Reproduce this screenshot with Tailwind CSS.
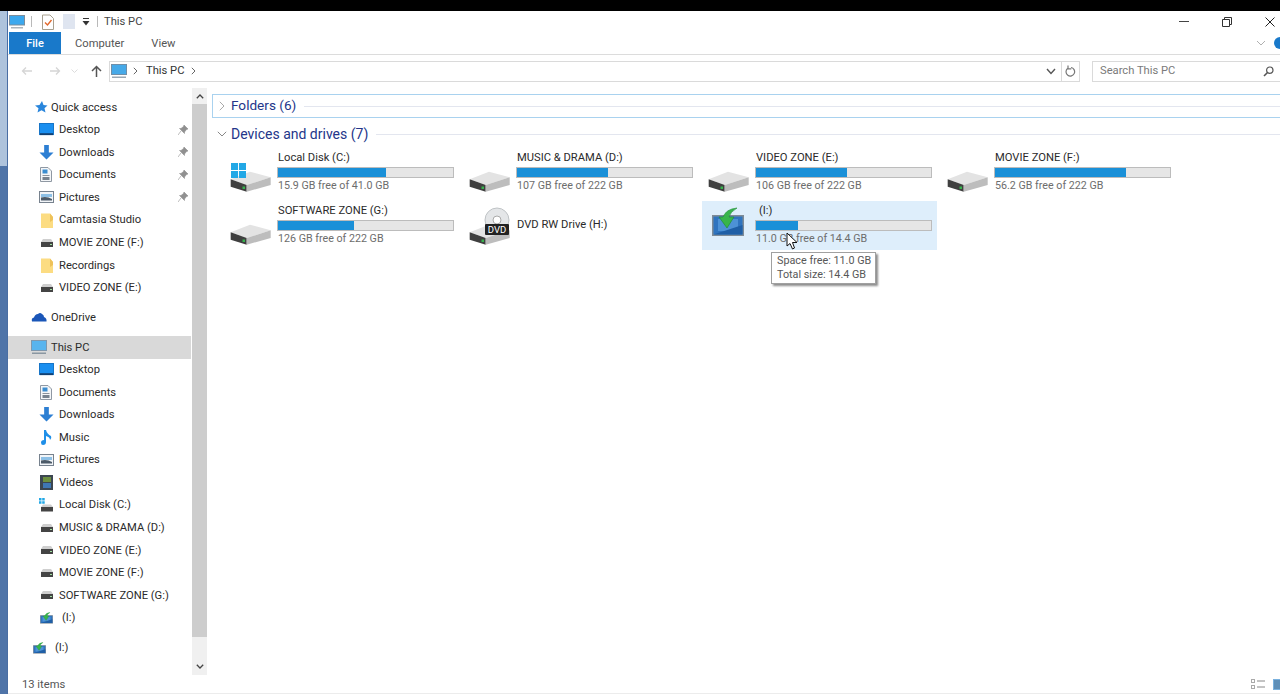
<!doctype html>
<html><head><meta charset="utf-8"><script src="https://cdn.jsdelivr.net/npm/@tailwindcss/browser@4"></script></head>
<body class="m-0 overflow-hidden bg-white">
<svg class="hidden" width="0" height="0">
<symbol id="hdd" viewBox="0 0 42 24"><path d="M.7 11.300 L20 3.700 L40.700 9.300 L16.700 17Z" fill="#e3e3e3"/><path d="M.7 11.300 L16.700 17 V23.700 L.7 18.700Z" fill="#3f3f3f"/><path d="M16.700 17 L40.700 9.300 V17 L16.700 23.700Z" fill="#bdbdbd"/><rect x="12.500" y="18.500" width="2.500" height="2.500" fill="#37b24d"/></symbol>
<symbol id="mini" viewBox="0 0 14 10"><path d="M3 1 H11 L13 4 H1Z" fill="#cfcfcf"/><rect x="1" y="4" width="12" height="5" fill="#444"/><rect x="10" y="6" width="2" height="1" fill="#9fe0a0"/></symbol>
<symbol id="desk" viewBox="0 0 16 14"><rect x="0.5" y="0.5" width="15" height="12" fill="#1a8ff0" stroke="#0f6fc4"/><rect x="1" y="11" width="14" height="2" fill="#123f70"/></symbol>
<symbol id="down" viewBox="0 0 16 16"><path d="M5.5 0 H10.5 V8 H15.5 L8 15.5 L0.5 8 H5.5Z" fill="#2d7fd3"/></symbol>
<symbol id="docu" viewBox="0 0 12 15"><path d="M.5 .5 H8 L11.5 4 V14.5 H.5Z" fill="#f4f6f8" stroke="#8f98a3"/><rect x="2.5" y="2.5" width="5" height="4" fill="#3b8dd0"/><rect x="2.5" y="8" width="7" height="1" fill="#8a929c"/><rect x="2.5" y="10" width="7" height="3" fill="#77828e"/></symbol>
<symbol id="pict" viewBox="0 0 15 12"><rect x=".5" y=".5" width="14" height="11" fill="#f2f5f8" stroke="#77828e"/><path d="M2 3 H13 V6 H2Z" fill="#8dc0e6"/><path d="M2 9.5 V6.5 Q8 5 13 8 V9.5Z" fill="#4c5a68"/></symbol>
<symbol id="fold" viewBox="0 0 12 15"><path d="M0 .5 H9 L12 4 V15 H0Z" fill="#fcdc82"/><path d="M9 .5 V9 L12 7 V4Z" fill="#eec25a"/></symbol>
<symbol id="usb" viewBox="0 0 32 30"><path d="M0 8 H32 V29 H0Z" fill="#7f8b96"/><path d="M1.500 9.500 H30.500 V27.500 H1.500Z" fill="#2f74bf"/><path d="M6 12 H26 V24 H6Z" fill="#4d92d6"/><path d="M1.500 27.500 L30.500 18 V27.500Z" fill="#1f5fa6"/><path d="M25 1 Q14 2 11 10 H7 L15 21 L22 10 H17 Q18 5 25 1Z" fill="#38b54b" stroke="#1d8c31" stroke-width=".6"/></symbol>
<symbol id="pin" viewBox="0 0 10 10"><path d="M6 0 L10 4 L8.500 4.500 L6.500 7 V8.500 L1.500 3.500 H3 L5.500 1.500Z M3 6 L0 10" fill="#909090" stroke="#909090" stroke-width=".6"/></symbol>
</svg>

<div class="flex flex-col h-[694px] w-[1280px] text-[11.2px] text-[#2b2b2b] [font-family:Roboto,'Open_Sans',sans-serif] leading-none">
  <div class="h-[11px] bg-black shrink-0"></div>
  <div class="flex flex-1 min-h-0">
    <div class="w-[8px] shrink-0 flex flex-col border-r border-[#4a6ea3]"><div class="h-[155px] bg-[#aec3dc]"></div><div class="flex-1 bg-[#4f74a8]"></div></div>
    <div class="flex-1 min-w-0 flex flex-col relative">

      <!-- title bar -->
      <div class="h-[21px] shrink-0 flex items-center relative">
        <svg class="ml-[1px] w-[16px] h-[14px]" viewBox="0 0 16 14"><rect x=".5" y=".5" width="15" height="9.500" fill="#3ba8ee" stroke="#7b8d9c"/><rect x="2" y="12" width="12" height="1.500" fill="#aab4bc"/></svg>
        <div class="ml-[6px] w-px h-[11px] bg-[#b9b9b9]"></div>
        <svg class="ml-[10px] w-[12px] h-[16px]" viewBox="0 0 12 16"><path d="M.5 1 H8 L11.500 4.500 V15.500 H.5Z" fill="#fff" stroke="#a8a08f"/><path d="M3 8.500 L5.500 11 L9.500 6" fill="none" stroke="#e2682b" stroke-width="1.400"/></svg>
        <div class="ml-[9px] w-[12px] h-[15px] bg-[#dfe5f0]"></div>
        <svg class="ml-[6px] w-[10px] h-[8px]" viewBox="0 0 10 8"><rect x="2" y="0" width="6" height="1" fill="#333"/><path d="M1.500 3 H8.500 L5 7.500Z" fill="#333"/></svg>
        <div class="ml-[6px] w-px h-[11px] bg-[#b9b9b9]"></div>
        <span class="ml-[6px] text-[#444]">This PC</span>
        <div class="ml-auto flex items-center">
          <div class="w-[10px] h-[1.500px] bg-[#444] mr-[33px]"></div>
          <svg class="w-[10px] h-[10px] mr-[33px]" viewBox="0 0 10 10"><path d="M2.500 2.500 V.5 H9.500 V7.500 H7.500 M.5 2.500 H7.500 V9.500 H.5Z" fill="none" stroke="#333"/></svg>
          <svg class="w-[10px] h-[10px] mr-[5px]" viewBox="0 0 10 10"><path d="M.5 .5 L9.500 9.500 M9.500 .5 L.5 9.500" stroke="#222" stroke-width="1"/></svg>
        </div>
      </div>

      <!-- ribbon tabs -->
      <div class="h-[23px] shrink-0 flex items-stretch border-b border-[#dcdcdc] text-[#555]">
        <div class="ml-[1px] w-[52px] bg-[#1979ca] text-white flex items-center justify-center text-[11px] font-medium">File</div>
        <div class="ml-[14px] flex items-center pt-px">Computer</div>
        <div class="ml-[27px] flex items-center pt-px">View</div>
        <div class="ml-auto flex items-center">
          <svg class="w-[10px] h-[6px] mr-[8px]" viewBox="0 0 10 6"><path d="M1 1 L5 5 L9 1" fill="none" stroke="#b0b0b0"/></svg>
          <div class="w-[6px] h-[12px] bg-[#1979ca] rounded-l-full"></div>
        </div>
      </div>

      <!-- address row -->
      <div class="h-[33px] shrink-0 flex items-center pb-[1px]">
        <svg class="ml-[13px] w-[12px] h-[10px]" viewBox="0 0 12 10"><path d="M11 5 H1.500 M5 1.500 L1.500 5 L5 8.500" fill="none" stroke="#d5d5d5" stroke-width="1.300"/></svg>
        <svg class="ml-[16px] w-[12px] h-[10px]" viewBox="0 0 12 10"><path d="M1 5 H10.500 M7 1.500 L10.500 5 L7 8.500" fill="none" stroke="#d5d5d5" stroke-width="1.300"/></svg>
        <svg class="ml-[10px] w-[7px] h-[5px]" viewBox="0 0 7 5"><path d="M.5 .5 L3.500 3.500 L6.500 .5" fill="none" stroke="#dcdcdc"/></svg>
        <svg class="ml-[13px] w-[11px] h-[12px]" viewBox="0 0 11 12"><path d="M5.500 12 V1.500 M1 6 L5.500 1.500 L10 6" fill="none" stroke="#555" stroke-width="1.500"/></svg>
        <div class="ml-[7px] w-[971px] h-[21px] border border-[#dadada] flex items-center text-[#333]">
          <svg class="ml-[1px] w-[16px] h-[15px]" viewBox="0 0 16 15"><rect x=".5" y=".5" width="15" height="10" fill="#46a9e8" stroke="#6f8ea8"/><rect x="1" y="12.500" width="14" height="1.500" fill="#9aa8b4"/></svg>
          <svg class="ml-[6px] w-[5px] h-[8px]" viewBox="0 0 5 8"><path d="M.8 .8 L4 4 L.8 7.200" fill="none" stroke="#666"/></svg>
          <span class="ml-[8px]">This PC</span>
          <svg class="ml-[7px] w-[5px] h-[8px]" viewBox="0 0 5 8"><path d="M.8 .8 L4 4 L.8 7.200" fill="none" stroke="#666"/></svg>
          <svg class="ml-auto mr-[5px] w-[10px] h-[7px]" viewBox="0 0 10 7"><path d="M1 1 L5 5.500 L9 1" fill="none" stroke="#555" stroke-width="1.400"/></svg>
          <div class="w-px h-full bg-[#dadada] mr-[3px]"></div>
          <svg class="w-[11px] h-[12px] mr-[3px]" viewBox="0 0 11 12"><path d="M2.500 3.500 A4.300 4.300 0 1 0 6 2.500 M3 .5 V3.800 H6.300" fill="none" stroke="#777" stroke-width="1.200"/></svg>
        </div>
        <div class="ml-[12px] flex-1 h-[21px] border-y border-l border-[#dadada] flex items-center text-[#7a7a7a]">
          <span class="ml-[7px]">Search This PC</span>
          <svg class="ml-auto mr-[6px] w-[11px] h-[11px]" viewBox="0 0 11 11"><circle cx="6.800" cy="4.200" r="3.200" fill="none" stroke="#555" stroke-width="1.200"/><path d="M4.500 6.500 L1 10" stroke="#555" stroke-width="1.600"/></svg>
        </div>
      </div>

      <!-- body -->
      <div class="flex-1 min-h-0 flex">
        <!-- nav pane -->
        <div class="w-[183px] shrink-0 overflow-hidden pt-[8px]">
          <div class="flex items-center h-[22.55px] pl-[26px]"><svg class="w-[14px] h-[14px] mr-[3px]" viewBox="0 0 14 14"><path d="M8 1 L9.500 5 L13.500 5.500 L10.500 8.300 L11.500 12.500 L7.500 10.300 L3.500 12.500 L4.500 8.300 L1 5.500 L5.500 5Z" fill="#2a86dc"/></svg>Quick access</div>
          <div class="flex items-center h-[22.55px] pl-[31px]"><svg class="w-[15px] h-[13px] mr-[5px]"><use href="#desk"/></svg>Desktop<svg class="ml-auto mr-[3px] w-[10px] h-[10px]"><use href="#pin"/></svg></div>
          <div class="flex items-center h-[22.55px] pl-[31px]"><svg class="w-[15px] h-[15px] mr-[5px]"><use href="#down"/></svg>Downloads<svg class="ml-auto mr-[3px] w-[10px] h-[10px]"><use href="#pin"/></svg></div>
          <div class="flex items-center h-[22.55px] pl-[32px]"><svg class="w-[12px] h-[15px] mr-[7px]"><use href="#docu"/></svg>Documents<svg class="ml-auto mr-[3px] w-[10px] h-[10px]"><use href="#pin"/></svg></div>
          <div class="flex items-center h-[22.55px] pl-[31px]"><svg class="w-[15px] h-[12px] mr-[5px]"><use href="#pict"/></svg>Pictures<svg class="ml-auto mr-[3px] w-[10px] h-[10px]"><use href="#pin"/></svg></div>
          <div class="flex items-center h-[22.55px] pl-[33px]"><svg class="w-[12px] h-[15px] mr-[6px]"><use href="#fold"/></svg>Camtasia Studio</div>
          <div class="flex items-center h-[22.55px] pl-[32px]"><svg class="w-[14px] h-[10px] mr-[5px]"><use href="#mini"/></svg>MOVIE ZONE (F:)</div>
          <div class="flex items-center h-[22.55px] pl-[33px]"><svg class="w-[12px] h-[15px] mr-[6px]"><use href="#fold"/></svg>Recordings</div>
          <div class="flex items-center h-[22.55px] pl-[32px]"><svg class="w-[14px] h-[10px] mr-[5px]"><use href="#mini"/></svg>VIDEO ZONE (E:)</div>

          <div class="flex items-center h-[22.55px] mt-[7px] pl-[23px]"><svg class="w-[16px] h-[10px] mr-[4px]" viewBox="0 0 16 10"><path d="M1 9.500 Q0 6 3 5.500 Q4 2 7 2 Q9 0 11 2 Q13 3 13 5 Q16 6 15.500 9.500Z" fill="#1a56b8"/></svg>OneDrive</div>

          <div class="flex items-center h-[22.55px] mt-[7.500px] pl-[23px] bg-[#d9d9d9]"><svg class="w-[16px] h-[15px] mr-[4px]" viewBox="0 0 16 15"><rect x=".5" y=".5" width="15" height="10" fill="#58b4ee" stroke="#7f98ae"/><rect x="1" y="12.500" width="14" height="1.500" fill="#8a97a2"/></svg>This PC</div>
          <div class="flex items-center h-[22.55px] pl-[31px]"><svg class="w-[15px] h-[13px] mr-[5px]"><use href="#desk"/></svg>Desktop</div>
          <div class="flex items-center h-[22.55px] pl-[32px]"><svg class="w-[12px] h-[15px] mr-[7px]"><use href="#docu"/></svg>Documents</div>
          <div class="flex items-center h-[22.55px] pl-[31px]"><svg class="w-[15px] h-[15px] mr-[5px]"><use href="#down"/></svg>Downloads</div>
          <div class="flex items-center h-[22.55px] pl-[33px]"><svg class="w-[11px] h-[15px] mr-[7px]" viewBox="0 0 11 15"><path d="M3 0 H5 Q6 4 10 6 Q11 8 9 10 Q9 7 5 6 V12 Q5 15 2 15 Q0 15 0 12.500 Q0 10 3 10Z" fill="#1f8fe8"/></svg>Music</div>
          <div class="flex items-center h-[22.55px] pl-[31px]"><svg class="w-[15px] h-[12px] mr-[5px]"><use href="#pict"/></svg>Pictures</div>
          <div class="flex items-center h-[22.55px] pl-[32px]"><svg class="w-[13px] h-[15px] mr-[6px]" viewBox="0 0 13 15"><rect width="13" height="15" fill="#3c4650"/><rect x="3" y="2" width="8" height="5" fill="#6c8f3f"/><rect x="3" y="8" width="8" height="5" fill="#3f77b4"/></svg>Videos</div>
          <div class="flex items-center h-[22.55px] pl-[31px]"><svg class="w-[15px] h-[14px] mr-[5px]" viewBox="0 0 15 14"><path d="M0 0 H2.500 V2.500 H0Z M3.200 0 H5.700 V2.500 H3.200Z M0 3.200 H2.500 V5.700 H0Z M3.200 3.200 H5.700 V5.700 H3.200Z" fill="#22a8e6"/><path d="M4 6.500 H12 L14 9 H2Z" fill="#cfcfcf"/><rect x="2" y="9" width="12" height="4.500" fill="#444"/></svg>Local Disk (C:)</div>
          <div class="flex items-center h-[22.55px] pl-[32px]"><svg class="w-[14px] h-[10px] mr-[5px]"><use href="#mini"/></svg>MUSIC &amp; DRAMA (D:)</div>
          <div class="flex items-center h-[22.55px] pl-[32px]"><svg class="w-[14px] h-[10px] mr-[5px]"><use href="#mini"/></svg>VIDEO ZONE (E:)</div>
          <div class="flex items-center h-[22.55px] pl-[32px]"><svg class="w-[14px] h-[10px] mr-[5px]"><use href="#mini"/></svg>MOVIE ZONE (F:)</div>
          <div class="flex items-center h-[22.55px] pl-[32px]"><svg class="w-[14px] h-[10px] mr-[5px]"><use href="#mini"/></svg>SOFTWARE ZONE (G:)</div>
          <div class="flex items-center h-[22.55px] pl-[32px]"><svg class="w-[13px] h-[12px] mr-[9px]"><use href="#usb"/></svg>(I:)</div>
          <div class="flex items-center h-[22.55px] mt-[7.500px] pl-[25px]"><svg class="w-[13px] h-[12px] mr-[9px]"><use href="#usb"/></svg>(I:)</div>
        </div>

        <!-- scrollbar -->
        <div class="w-[15px] ml-[1px] shrink-0 bg-[#f0f0f0] flex flex-col h-[587px]">
          <div class="h-[16px] flex items-center justify-center"><svg class="w-[8px] h-[5px]" viewBox="0 0 8 5"><path d="M.8 4.200 L4 1 L7.200 4.200" fill="none" stroke="#444" stroke-width="1.300"/></svg></div>
          <div class="h-[533px] bg-[#cdcdcd]"></div>
          <div class="flex-1 flex items-end justify-center pb-[6px]"><svg class="w-[8px] h-[5px]" viewBox="0 0 8 5"><path d="M.8 .8 L4 4 L7.200 .8" fill="none" stroke="#444" stroke-width="1.300"/></svg></div>
        </div>

        <!-- content -->
        <div class="flex-1 min-w-0 pl-[5px] pt-[6px] relative">
          <div class="h-[24px] border border-r-0 border-[#a9d2ef] flex items-center text-[13.6px] text-[#24368a]">
            <svg class="ml-[6px] w-[6px] h-[10px]" viewBox="0 0 6 10"><path d="M.8 .8 L5 5 L.8 9.200" fill="none" stroke="#aaa"/></svg>
            <span class="ml-[6px]">Folders (6)</span>
            <div class="ml-[8px] flex-1 h-px bg-[#e3e6ef]"></div>
          </div>
          <div class="h-[24px] mt-[4px] flex items-center text-[14px] text-[#24368a]">
            <svg class="ml-[5px] w-[10px] h-[6px]" viewBox="0 0 10 6"><path d="M.8 .8 L5 5 L9.200 .8" fill="none" stroke="#888"/></svg>
            <span class="ml-[4px]">Devices and drives (7)</span>
            <div class="ml-[8px] flex-1 h-px bg-[#e3e6ef]"></div>
          </div>

          <div class="grid grid-cols-[235px_235px_235px_235px] gap-x-[4px] gap-y-[4px] ml-[12px] mt-[2px] auto-rows-[49px]">
            <div class="relative flex">
              <div class="w-[53px] shrink-0 relative"><svg class="absolute left-[6px] top-[20px] w-[42px] h-[24px]"><use href="#hdd"/></svg><svg class="absolute left-[7px] top-[15px] w-[15px] h-[15px]" viewBox="0 0 16 16"><path d="M0 0 H7.500 V7.500 H0Z M8.500 0 H16 V7.500 H8.500Z M0 8.500 H7.500 V16 H0Z M8.500 8.500 H16 V16 H8.500Z" fill="#22a8e6"/></svg></div>
              <div class="w-[177px]"><div class="h-[19px] flex items-center pl-[1px]">Local Disk (C:)</div><div class="h-[11px] bg-[#e6e6e6] border border-[#bcbcbc]"><div class="h-full bg-[#1a90d8] w-[108px]"></div></div><div class="h-[17px] flex items-center pl-[1px] text-[#6d6d6d] text-[10.7px]">15.9 GB free of 41.0 GB</div></div>
            </div>
            <div class="relative flex">
              <div class="w-[53px] shrink-0 relative"><svg class="absolute left-[6px] top-[20px] w-[42px] h-[24px]"><use href="#hdd"/></svg></div>
              <div class="w-[177px]"><div class="h-[19px] flex items-center pl-[1px]">MUSIC &amp; DRAMA (D:)</div><div class="h-[11px] bg-[#e6e6e6] border border-[#bcbcbc]"><div class="h-full bg-[#1a90d8] w-[91px]"></div></div><div class="h-[17px] flex items-center pl-[1px] text-[#6d6d6d] text-[10.7px]">107 GB free of 222 GB</div></div>
            </div>
            <div class="relative flex">
              <div class="w-[53px] shrink-0 relative"><svg class="absolute left-[6px] top-[20px] w-[42px] h-[24px]"><use href="#hdd"/></svg></div>
              <div class="w-[177px]"><div class="h-[19px] flex items-center pl-[1px]">VIDEO ZONE (E:)</div><div class="h-[11px] bg-[#e6e6e6] border border-[#bcbcbc]"><div class="h-full bg-[#1a90d8] w-[91px]"></div></div><div class="h-[17px] flex items-center pl-[1px] text-[#6d6d6d] text-[10.7px]">106 GB free of 222 GB</div></div>
            </div>
            <div class="relative flex">
              <div class="w-[53px] shrink-0 relative"><svg class="absolute left-[6px] top-[20px] w-[42px] h-[24px]"><use href="#hdd"/></svg></div>
              <div class="w-[177px]"><div class="h-[19px] flex items-center pl-[1px]">MOVIE ZONE (F:)</div><div class="h-[11px] bg-[#e6e6e6] border border-[#bcbcbc]"><div class="h-full bg-[#1a90d8] w-[131px]"></div></div><div class="h-[17px] flex items-center pl-[1px] text-[#6d6d6d] text-[10.7px]">56.2 GB free of 222 GB</div></div>
            </div>

            <div class="relative flex">
              <div class="w-[53px] shrink-0 relative"><svg class="absolute left-[6px] top-[20px] w-[42px] h-[24px]"><use href="#hdd"/></svg></div>
              <div class="w-[177px]"><div class="h-[19px] flex items-center pl-[1px]">SOFTWARE ZONE (G:)</div><div class="h-[11px] bg-[#e6e6e6] border border-[#bcbcbc]"><div class="h-full bg-[#1a90d8] w-[76px]"></div></div><div class="h-[17px] flex items-center pl-[1px] text-[#6d6d6d] text-[10.7px]">126 GB free of 222 GB</div></div>
            </div>
            <div class="relative flex">
              <div class="w-[53px] shrink-0 relative"><svg class="absolute left-[6px] top-[20px] w-[42px] h-[24px]"><use href="#hdd"/></svg>
                <svg class="absolute left-[21px] top-[6px] w-[26px] h-[26px]" viewBox="0 0 26 26"><circle cx="13" cy="13" r="12" fill="#e4e6e8" stroke="#bfc3c6"/><circle cx="13" cy="13" r="4" fill="#fff" stroke="#aaa"/></svg>
                <div class="absolute left-[22px] top-[23px] w-[24px] h-[11px] bg-[#222] text-white text-[9.500px] flex items-center justify-center rounded-[1px]">DVD</div></div>
              <div class="w-[177px] flex items-center"><span class="pl-[1px] -mt-[1px]">DVD RW Drive (H:)</span></div>
            </div>
            <div class="relative flex bg-[#deeefb]">
              <div class="w-[53px] shrink-0 relative"><svg class="absolute left-[10px] top-[6px] w-[32px] h-[30px]"><use href="#usb"/></svg></div>
              <div class="w-[177px]"><div class="h-[19px] flex items-center pl-[4px]">(I:)</div><div class="h-[11px] bg-[#e6e6e6] border border-[#bcbcbc]"><div class="h-full bg-[#1a90d8] w-[42px]"></div></div><div class="h-[17px] flex items-center pl-[1px] text-[#6d6d6d] text-[10.7px]">11.0 GB free of 14.4 GB</div></div>
            </div>
          </div>

          <!-- tooltip and cursor -->
          <div class="absolute left-[564px] top-[164px] w-[105px] h-[32px] bg-white border border-[#a0a0a0] shadow-[2px_2px_2px_rgba(0,0,0,.45)] text-[#575757] text-[10.8px] leading-[14px] px-[5px] py-[1px] whitespace-nowrap">Space free: 11.0 GB<br>Total size: 14.4 GB</div>
          <svg class="absolute left-[579px] top-[144px] w-[13px] h-[18px]" viewBox="0 0 13 18"><path d="M1 1 V14 L4 11.500 L6.500 17 L8.500 16 L6.500 10.500 H11Z" fill="#fff" stroke="#111"/></svg>
        </div>
      </div>

      <!-- status bar -->
      <div class="h-[18px] shrink-0 flex items-center text-[#555] border-b border-[#ececec]">
        <span class="ml-[14px]">13 items</span>
        <svg class="ml-auto mr-[7px] w-[15px] h-[11px]" viewBox="0 0 15 11"><rect x=".5" y=".5" width="3" height="3" fill="none" stroke="#aaa"/><rect x=".5" y="6.500" width="3" height="3" fill="none" stroke="#aaa"/><path d="M6 2 H14 M6 8 H14" stroke="#888"/></svg>
        <svg class="w-[7px] h-[11px]" viewBox="0 0 7 11"><rect x=".5" y=".5" width="11" height="10" fill="#5e8fb8" stroke="#7ab1de"/></svg>
      </div>
    </div>
  </div>
</div>
</body></html>
